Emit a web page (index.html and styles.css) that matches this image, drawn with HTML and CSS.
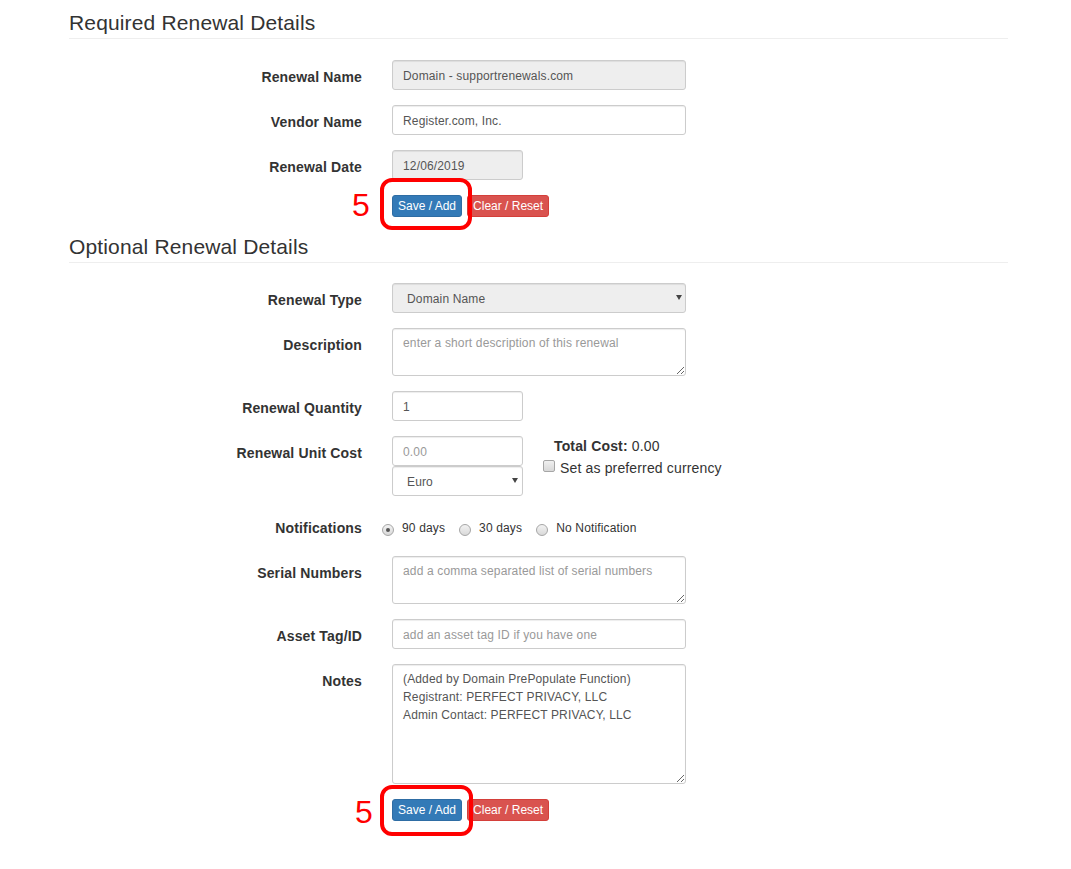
FILE: index.html
```html
<!DOCTYPE html>
<html>
<head>
<meta charset="utf-8">
<title>Renewal Details</title>
<link rel="stylesheet" href="styles.css">
</head>
<body>
<div class="page">
  <h3 class="section-title">Required Renewal Details</h3>
  <form class="form">
    <div class="row">
      <label class="lbl">Renewal Name</label>
      <div class="ctl"><input class="field field-ro" readonly value="Domain - supportrenewals.com"></div>
    </div>
    <div class="row">
      <label class="lbl">Vendor Name</label>
      <div class="ctl"><input class="field" value="Register.com, Inc."></div>
    </div>
    <div class="row">
      <label class="lbl">Renewal Date</label>
      <div class="ctl"><input class="field field-sm field-ro" readonly value="12/06/2019"></div>
    </div>
    <div class="row row-actions">
      <div></div>
      <div class="actions">
        <span class="mark-num mark-num-top">5</span>
        <span class="mark-box mark-box-top"></span>
        <button type="button" class="btn btn-primary">Save / Add</button>
        <button type="button" class="btn btn-danger">Clear / Reset</button>
      </div>
    </div>
  </form>

  <h3 class="section-title section-title-2">Optional Renewal Details</h3>
  <form class="form">
    <div class="row">
      <label class="lbl">Renewal Type</label>
      <div class="ctl">
        <div class="select">
          <select class="field field-ro"><option>Domain Name</option></select>
          <span class="caret"></span>
        </div>
      </div>
    </div>
    <div class="row">
      <label class="lbl">Description</label>
      <div class="ctl"><textarea class="field" placeholder="enter a short description of this renewal"></textarea></div>
    </div>
    <div class="row">
      <label class="lbl">Renewal Quantity</label>
      <div class="ctl"><input class="field field-sm" value="1"></div>
    </div>
    <div class="row">
      <label class="lbl">Renewal Unit Cost</label>
      <div class="ctl cost">
        <div class="cost-col">
          <input class="field field-sm" placeholder="0.00">
          <div class="select select-sm">
            <select class="field field-sm"><option>Euro</option></select>
            <span class="caret caret-sm"></span>
          </div>
        </div>
        <div class="cost-side">
          <div class="total"><strong>Total Cost:</strong> 0.00</div>
          <div class="pref"><input type="checkbox" class="check">Set as preferred currency</div>
        </div>
      </div>
    </div>
    <div class="row row-notif">
      <label class="lbl">Notifications</label>
      <div class="radios">
        <label class="radio-opt"><input type="radio" name="notif" class="radio" checked>90 days</label>
        <label class="radio-opt"><input type="radio" name="notif" class="radio">30 days</label>
        <label class="radio-opt"><input type="radio" name="notif" class="radio">No Notification</label>
      </div>
    </div>
    <div class="row">
      <label class="lbl">Serial Numbers</label>
      <div class="ctl"><textarea class="field" placeholder="add a comma separated list of serial numbers"></textarea></div>
    </div>
    <div class="row">
      <label class="lbl">Asset Tag/ID</label>
      <div class="ctl"><input class="field" placeholder="add an asset tag ID if you have one"></div>
    </div>
    <div class="row">
      <label class="lbl">Notes</label>
      <div class="ctl"><textarea class="field field-notes">(Added by Domain PrePopulate Function)
Registrant: PERFECT PRIVACY, LLC
Admin Contact: PERFECT PRIVACY, LLC</textarea></div>
    </div>
    <div class="row row-actions">
      <div></div>
      <div class="actions">
        <span class="mark-num mark-num-bottom">5</span>
        <span class="mark-box mark-box-bottom"></span>
        <button type="button" class="btn btn-primary">Save / Add</button>
        <button type="button" class="btn btn-danger">Clear / Reset</button>
      </div>
    </div>
  </form>
</div>
</body>
</html>
```

FILE: styles.css
```css
* { box-sizing: border-box; }

body {
  margin: 0;
  background: #fff;
  color: #333;
  font-family: "Liberation Sans", Arial, sans-serif;
  font-size: 14px;
  line-height: 20px;
  letter-spacing: 0.15px;
}

.page {
  width: 939px;
  margin-left: 69px;
  padding-top: 11px;
  padding-bottom: 48px;
}

.section-title {
  margin: 0 0 21px;
  padding-bottom: 4px;
  border-bottom: 1px solid #eee;
  font-size: 21px;
  line-height: 23px;
  font-weight: 400;
  color: #333;
}

.section-title-2 { margin-top: 18px; margin-bottom: 20px; }

.form { margin: 0; }

.row {
  display: grid;
  grid-template-columns: 293px 1fr;
  column-gap: 30px;
  margin-bottom: 15px;
}

.row-actions { margin-bottom: 0; }
.row-notif { min-height: 30px; }

.lbl {
  padding-top: 7px;
  text-align: right;
  font-weight: 700;
  color: #333;
}

.field {
  display: block;
  width: 294px;
  height: 30px;
  margin: 0;
  padding: 6px 10px 4px;
  font-family: "Liberation Sans", Arial, sans-serif;
  font-size: 12px;
  line-height: 18px;
  letter-spacing: 0.15px;
  color: #555;
  background: #fff;
  border: 1px solid #ccc;
  border-radius: 3px;
  box-shadow: inset 0 1px 1px rgba(0, 0, 0, .075);
  outline: none;
}

.field::placeholder { color: #999; opacity: 1; }

.field-sm { width: 131px; }
.field-ro { background: #eee; }

textarea.field {
  height: 48px;
  padding: 5px 10px;
  resize: both;
}

textarea.field-notes { height: 120px; }

.select {
  position: relative;
  width: 294px;
}

.select-sm { width: 131px; }

.select select {
  -webkit-appearance: none;
  appearance: none;
  width: 100%;
  padding-left: 14px;
}

.caret {
  position: absolute;
  right: 4px;
  top: 12px;
  width: 0;
  height: 0;
  border-left: 3px solid transparent;
  border-right: 3px solid transparent;
  border-top: 5px solid #444;
}

.caret-sm { right: 5px; }

.cost { display: flex; }

.cost-side { margin-left: 20px; }

.total { padding-left: 11px; }
.total strong { font-weight: 700; }

.pref { margin-top: 2px; }

.check {
  -webkit-appearance: none;
  appearance: none;
  display: inline-block;
  width: 12px;
  height: 12px;
  margin: 0 5px 0 0;
  vertical-align: 1px;
  border: 1px solid #a6a6a6;
  border-radius: 2px;
  background: linear-gradient(#f0f0f0, #d8d8d8);
}

.radios {
  display: flex;
  padding-top: 7px;
  margin-left: -10px;
  font-size: 12px;
  line-height: 20px;
  color: #333;
}

.radio-opt { margin-right: 14px; white-space: nowrap; }

.radio {
  -webkit-appearance: none;
  appearance: none;
  display: inline-block;
  position: relative;
  width: 12px;
  height: 12px;
  margin: 0 8px 0 0;
  vertical-align: -4px;
  border: 1px solid #a6a6a6;
  border-radius: 50%;
  background: linear-gradient(#f2f2f2, #d9d9d9);
}

.radio:checked::after {
  content: "";
  position: absolute;
  left: 3px;
  top: 3px;
  width: 4px;
  height: 4px;
  border-radius: 50%;
  background: #555;
}

.actions {
  position: relative;
  display: flex;
  height: 22px;
}

.btn {
  display: inline-block;
  margin: 0;
  padding: 1px 5px;
  font-family: "Liberation Sans", Arial, sans-serif;
  font-size: 12px;
  line-height: 18px;
  letter-spacing: 0;
  color: #fff;
  border: 1px solid transparent;
  border-radius: 3px;
  cursor: pointer;
}

.btn-primary { background: #337ab7; border-color: #2e6da4; }
.btn-danger { background: #d9534f; border-color: #d43f3a; margin-left: 5px; }

.mark-box {
  position: absolute;
  left: -12px;
  width: 92px;
  height: 52px;
  border: 4.5px solid #f00;
  border-radius: 12px;
  pointer-events: none;
}

.mark-box-top { top: -17px; }
.mark-box-bottom { top: -14px; height: 51px; width: 93px; }

.mark-num {
  position: absolute;
  font-size: 32px;
  line-height: 32px;
  letter-spacing: 0;
  color: #f00;
}

.mark-num-top { left: -40px; top: -6px; }
.mark-num-bottom { left: -37px; top: -3px; }
```
